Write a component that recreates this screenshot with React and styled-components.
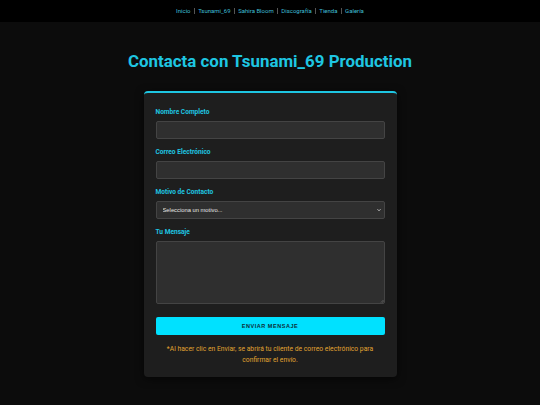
import React from "react";
import styled, { createGlobalStyle } from "styled-components";

const Global = createGlobalStyle`
  html, body { margin: 0; padding: 0; background: #0c0c0c; }
  body { font-family: Roboto, "Liberation Sans", Arial, sans-serif; }
  * { box-sizing: border-box; }
`;

const Page = styled.div`
  min-height: 405px;
  background: #0c0c0c;
  display: flex;
  flex-direction: column;
  align-items: center;
`;

const Header = styled.header`
  width: 100%;
  height: 22px;
  background: #000;
  display: flex;
  align-items: center;
  justify-content: center;
`;

const Nav = styled.nav`
  display: flex;
  align-items: center;
`;

const NavLink = styled.a`
  font-family: Roboto, "Liberation Sans", sans-serif;
  font-size: 6px;
  color: #3fbfd6;
  text-decoration: none;
  padding: 0 3.3px;
  line-height: 6px;
  border-left: ${(p) => (p.$first ? "none" : "0.5px solid #555")};
`;

const Title = styled.h1`
  margin: 29px 0 0;
  font-family: Roboto, "Liberation Sans", sans-serif;
  font-weight: 700;
  font-size: 16.9px;
  line-height: 20px;
  color: #1ec6e2;
  text-align: center;
`;

const Card = styled.form`
  margin-top: 20px;
  width: 253px;
  background: #1e1e1e;
  border-top: 2px solid #1ec6e2;
  border-radius: 4px;
  box-shadow: 0 2px 8px rgba(0, 0, 0, 0.6);
  padding: 15px 12px 11px;
  display: flex;
  flex-direction: column;
`;

const Group = styled.div`
  display: flex;
  flex-direction: column;
  margin-bottom: 9px;
`;

const Label = styled.label`
  font-family: Roboto, "Liberation Sans", sans-serif;
  font-weight: 700;
  font-size: 6.6px;
  line-height: 9px;
  color: #1ec6e2;
  margin-bottom: 4px;
`;

const fieldBase = `
  display: block;
  width: 100%;
  background: #2f2f2f;
  border: 0.6px solid #444;
  border-radius: 2px;
  color: #ddd;
  outline: none;
  margin: 0;
`;

const Input = styled.input`
  ${fieldBase}
  height: 18px;
`;

const SelectWrap = styled.div`
  position: relative;
  height: 18px;
`;

const Select = styled.select`
  ${fieldBase}
  appearance: none;
  -webkit-appearance: none;
  height: 18px;
  font-family: "Liberation Sans", Arial, sans-serif;
  font-size: 5.8px;
  color: #e6e6e6;
  padding: 0 3px 0 6px;
`;

const Chevron = styled.svg`
  position: absolute;
  right: 4px;
  top: 7px;
  width: 4px;
  height: 4px;
  pointer-events: none;
`;

const AreaWrap = styled.div`
  position: relative;
`;

const TextArea = styled.textarea`
  ${fieldBase}
  height: 63px;
  resize: none;
`;

const Grip = styled.svg`
  position: absolute;
  right: 1px;
  bottom: 1px;
  width: 4px;
  height: 4px;
  pointer-events: none;
`;

const Button = styled.button`
  margin-top: 4px;
  height: 18px;
  width: 100%;
  background: #00e1ff;
  border: none;
  border-radius: 2px;
  font-family: "Liberation Sans", Arial, sans-serif;
  font-weight: 700;
  font-size: 5.5px;
  letter-spacing: 0.55px;
  color: #0d2e37;
  text-transform: uppercase;
`;

const Note = styled.p`
  margin: 9px 0 0;
  font-family: Roboto, "Liberation Sans", sans-serif;
  font-size: 6.75px;
  line-height: 11px;
  color: #e0a331;
  text-align: center;
  padding: 0 4px;
`;

const links = ["Inicio", "Tsunami_69", "Sahira Bloom", "Discografía", "Tienda", "Galería"];

export default function App() {
  return (
    <>
      <Global />
      <Page>
        <Header>
          <Nav>
            {links.map((l, i) => (
              <NavLink key={l} href="#" $first={i === 0}>
                {l}
              </NavLink>
            ))}
          </Nav>
        </Header>
        <Title>Contacta con Tsunami_69 Production</Title>
        <Card onSubmit={(e) => e.preventDefault()}>
          <Group>
            <Label>Nombre Completo</Label>
            <Input type="text" />
          </Group>
          <Group>
            <Label>Correo Electrónico</Label>
            <Input type="email" />
          </Group>
          <Group>
            <Label>Motivo de Contacto</Label>
            <SelectWrap>
              <Select defaultValue="">
                <option value="">Selecciona un motivo...</option>
              </Select>
              <Chevron viewBox="0 0 8 8">
                <path d="M1 2.5 L4 5.5 L7 2.5" fill="none" stroke="#e6e6e6" strokeWidth="1.6" />
              </Chevron>
            </SelectWrap>
          </Group>
          <Group>
            <Label>Tu Mensaje</Label>
            <AreaWrap>
              <TextArea />
              <Grip viewBox="0 0 8 8">
                <path d="M7 2 L2 7 M7 5 L5 7" stroke="#8a8a8a" strokeWidth="1" />
              </Grip>
            </AreaWrap>
          </Group>
          <Button type="submit">Enviar Mensaje</Button>
          <Note>
            *Al hacer clic en Enviar, se abrirá tu cliente de correo electrónico para confirmar el envío.
          </Note>
        </Card>
      </Page>
    </>
  );
}
